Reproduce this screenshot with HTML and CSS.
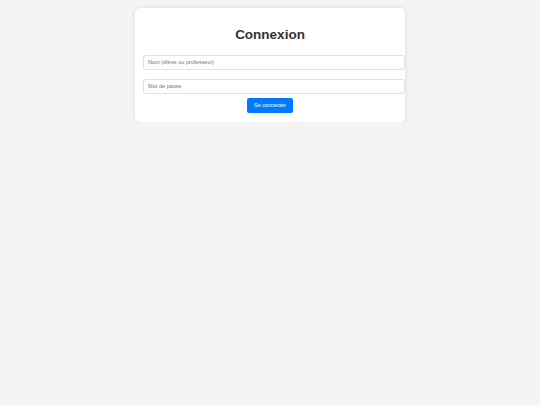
FILE: index.html
```html
<!DOCTYPE html>
<html lang="fr">
<head>
<meta charset="utf-8">
<title>Connexion</title>
<link rel="stylesheet" href="styles.css">
</head>
<body>
<div class="card">
  <h2 class="title">Connexion</h2>
  <form class="form">
    <input class="field" type="text" placeholder="Nom (élève ou professeur)">
    <input class="field" type="password" placeholder="Mot de passe">
    <div class="actions">
      <button class="btn" type="button">Se connecter</button>
    </div>
  </form>
</div>
</body>
</html>
```
FILE: styles.css
```css
html, body {
  margin: 0;
  padding: 0;
  background: #f4f4f4;
  font-family: "Liberation Sans", Arial, sans-serif;
}
body {
  padding-top: 8px;
}
.card {
  width: 254px;
  margin: 0 auto;
  padding: 8px 8px 9px;
  background: #ffffff;
  border-radius: 5px;
  box-shadow: 0 0 5px rgba(0, 0, 0, 0.1);
}
.title {
  margin: 10.5px 0 13px;
  font-size: 13.5px;
  line-height: 15.5px;
  font-weight: bold;
  color: #333333;
  text-align: center;
}
.form {
  margin: 0;
}
.field {
  display: block;
  box-sizing: content-box;
  width: 100%;
  height: 7px;
  margin: 0 0 9px;
  padding: 3px 2px 3px 4px;
  border: 1px solid #e2e2e2;
  border-radius: 3px;
  font-family: "Liberation Sans", Arial, sans-serif;
  font-size: 5.6px;
  line-height: 7px;
  color: #333;
  background: #fff;
  outline: none;
}
.field:last-of-type {
  margin-bottom: 4px;
}
.field::placeholder {
  color: #757575;
}
.actions {
  display: flex;
  justify-content: center;
}
.btn {
  height: 15px;
  padding: 0 7px;
  border: none;
  border-radius: 2px;
  background: #007bff;
  color: #ffffff;
  font-family: "Liberation Sans", Arial, sans-serif;
  font-size: 5.4px;
  line-height: 15px;
  cursor: pointer;
}
```
